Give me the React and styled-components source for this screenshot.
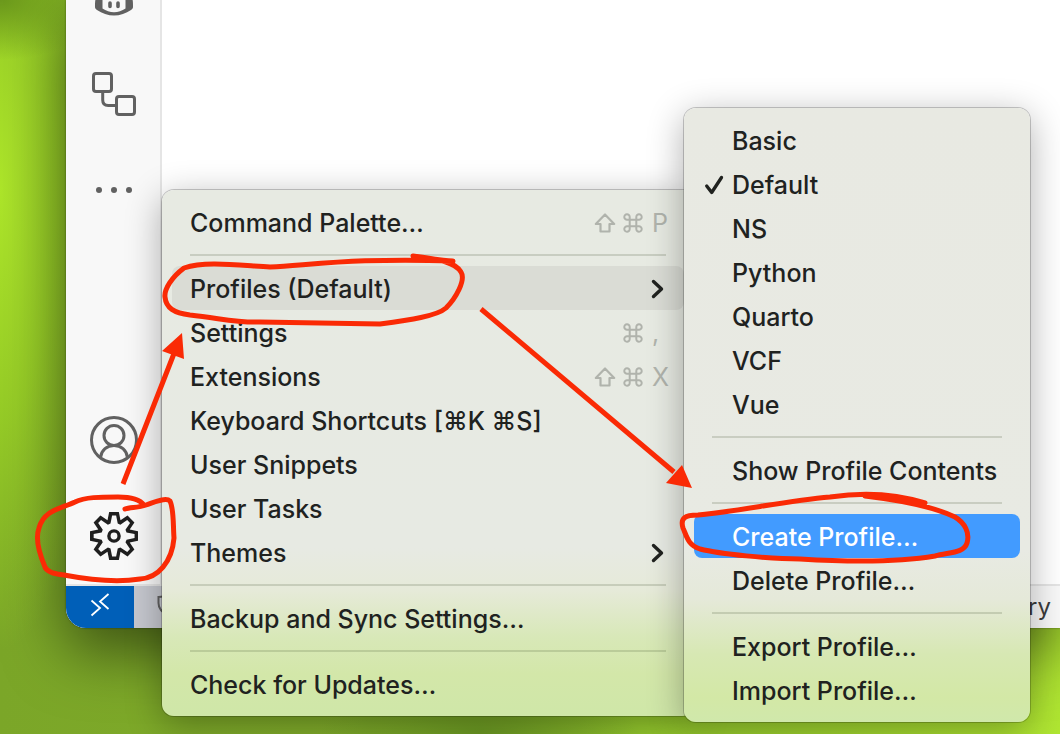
import React from "react";
import styled, { createGlobalStyle, css } from "styled-components";

const GlobalStyle = createGlobalStyle`
  *, *::before, *::after { box-sizing: border-box; }
  body {
    margin: 0;
    font-family: Inter, "Liberation Sans", sans-serif;
  }
  button { font: inherit; color: inherit; background: none; border: 0; padding: 0; margin: 0; }
`;

const Desktop = styled.div`
  position: relative;
  display: flex;
  min-height: 100vh;
  padding: 0 0 106px 66px;
  overflow: hidden;
  background:
    radial-gradient(ellipse 110px 60px at 0 0, #6b981c 0%, rgba(107, 152, 28, 0) 100%),
    radial-gradient(ellipse 110px 460px at 0 190px, #ade52a 0%, rgba(160, 218, 38, 0.7) 50%, rgba(140, 190, 36, 0) 100%),
    radial-gradient(ellipse 160px 60px at 480px 100%, #6a9722 0%, rgba(106, 151, 34, 0) 100%),
    linear-gradient(90deg, #7ba628 0%, #80ac2a 35%, #94c92d 60%, #b0e632 100%);
`;

const EditorWindow = styled.main`
  flex: 1;
  display: flex;
  flex-direction: column;
  overflow: hidden;
  background: #fff;
  border-bottom-left-radius: 20px;
  box-shadow: 0 0 2px rgba(0, 0, 0, 0.5), 0 24px 60px rgba(0, 0, 0, 0.5);
`;

const Workspace = styled.div`
  flex: 1;
  display: flex;
  min-height: 0;
`;

const ActivityBar = styled.nav`
  display: flex;
  flex-direction: column;
  width: 96px;
  box-shadow: inset -2px 0 #e5e5e5;
  background: #f8f8f8;
`;

const ActivityGroup = styled.div`
  display: flex;
  flex-direction: column;
  margin-top: ${(p) => (p.$bottom ? "auto" : "-50px")};
`;

const ActivityButton = styled.button`
  display: grid;
  place-items: center;
  height: 96px;
  color: ${(p) => (p.$active ? "#1f1f1f" : "#616161")};

  svg { display: block; }
`;

const StatusBar = styled.footer`
  display: flex;
  height: 44px;
  border-top: 2px solid #e5e5e5;
  background: #f8f8f8;
  color: #3b3b3b;
  font-size: 24px;
`;

const RemoteButton = styled.button`
  display: grid;
  place-items: center;
  width: 68px;
  padding-bottom: 4px;
  background: #005fb8;
  color: #fff;
`;

const StatusItem = styled.button`
  display: flex;
  align-items: center;
  padding: 0 8px 4px 22px;
  background: #c6c8cf;
  color: #616161;
`;

const StatusText = styled.span`
  align-self: center;
  margin-left: auto;
  padding: 0 9px 2px 0;
`;

const menuPlace = {
  main: css`
    left: 162px;
    bottom: 18px;
    width: 532px;
    background: linear-gradient(180deg, #e7eae2 0%, #e7eae3 68%, #e6ead9 76%, #d8e8b8 85%, #d3e7a9 92%, #cfe7a8 100%);
  `,
  sub: css`
    left: 684px;
    bottom: 12px;
    width: 346px;
    background: linear-gradient(180deg, #e8e9e2 0%, #e8eae3 72%, #e5e9d9 80%, #d7e8b3 89%, #d3e8a6 96%, #d0e8ab 100%);
  `,
};

const Menu = styled.div`
  position: absolute;
  display: flex;
  flex-direction: column;
  padding: 10px;
  border-radius: 12px;
  color: #20221f;
  box-shadow: 0 0 0 1px rgba(0, 0, 0, 0.2), 0 8px 36px rgba(0, 0, 0, 0.32);
  ${(p) => menuPlace[p.$place]}
`;

const MenuItem = styled.button`
  display: flex;
  align-items: center;
  justify-content: space-between;
  height: 44px;
  padding: 2px 18px 0;
  border-radius: 8px;
  font-size: 25px;
  font-weight: 500;
  line-height: 32px;
  text-align: left;
  white-space: nowrap;
  background: ${(p) => (p.$tone === "open" ? "#dadcd5" : p.$tone === "selected" ? "#429bff" : "transparent")};
  color: ${(p) => (p.$tone === "selected" ? "#fff" : "inherit")};
`;

const CheckableItem = styled(MenuItem)`
  justify-content: flex-start;
  padding: 2px 10px 0;
`;

const CheckSlot = styled.span`
  display: flex;
  width: 28px;
`;

const Separator = styled.hr`
  width: auto;
  height: 2px;
  margin: 10px 18px;
  border: 0;
  background: rgba(50, 65, 30, 0.17);
`;

const Shortcut = styled.span`
  display: flex;
  color: #b0b3ac;
  font-weight: 400;
`;

const Key = styled.kbd`
  display: flex;
  align-items: center;
  width: 29px;
  font: inherit;

  &:last-child { width: 14px; }
`;

const Annotations = styled.svg`
  position: absolute;
  top: 0;
  left: 0;
  pointer-events: none;
`;

const CopilotIcon = () => (
  <svg width="48" height="48" viewBox="0 0 48 48" fill="none" aria-hidden="true">
    <path d="M7 22C5 25 5 28 5 33C5 34 5.500 35 7 36C12 39.500 18 41.500 24 41.500S36 39.500 41 36C42.500 35 43 34 43 33C43 28 43 25 41 22" fill="#616161" />
    <path d="M12.500 22h23v12.500c-3.500 2.200-7.500 3.800-11.500 3.800s-8-1.600-11.500-3.800z" fill="#f8f8f8" />
    <path d="M20 29v3.500M28 29v3.500" stroke="#616161" strokeWidth="3.600" strokeLinecap="round" />
    <path d="M8 24V12l8-6h16l8 6v12" stroke="#616161" strokeWidth="3" />
  </svg>
);

const NodesIcon = () => (
  <svg width="48" height="48" viewBox="0 0 48 48" fill="none" stroke="currentColor" strokeWidth="3" aria-hidden="true">
    <rect x="3.5" y="3.5" width="18" height="18" rx="2.5" />
    <rect x="26.5" y="26.5" width="18" height="18" rx="2.5" />
    <path d="M12.7 22v8q0 5.5 5.5 5.5H26" />
  </svg>
);

const DotsIcon = () => (
  <svg width="48" height="48" viewBox="0 0 48 48" fill="currentColor" aria-hidden="true">
    <circle cx="9" cy="24" r="3" />
    <circle cx="24" cy="24" r="3" />
    <circle cx="39" cy="24" r="3" />
  </svg>
);

const AccountIcon = () => (
  <svg width="48" height="48" viewBox="0 0 48 48" fill="none" stroke="currentColor" strokeWidth="3" aria-hidden="true">
    <circle cx="24" cy="24" r="22.5" />
    <circle cx="24" cy="19.5" r="10" />
    <path d="M10.5 41.5C11.5 34 17 29.5 24 29.5S36.500 34 37.500 41.500" />
  </svg>
);

const GearIcon = () => (
  <svg width="48" height="48" viewBox="0 0 24 24" fill="currentColor" fillRule="evenodd" aria-hidden="true">
    <path d="M19.85 8.75l4.15.83v4.84l-4.15.83 2.35 3.52-3.43 3.43-3.52-2.35-.83 4.15H9.58l-.83-4.15-3.52 2.35-3.43-3.43 2.35-3.52L0 14.42V9.58l4.15-.83L1.8 5.23 5.23 1.8l3.52 2.35L9.58 0h4.84l.83 4.15 3.52-2.35 3.43 3.43-2.35 3.52zm-1.57 5.07l4-.81v-2l-4-.81-.54-1.3 2.29-3.43-1.43-1.43-3.43 2.29-1.3-.54-.81-4h-2l-.81 4-1.3.54-3.43-2.29-1.43 1.43L6.38 8.9l-.54 1.3-4 .81v2l4 .81.54 1.3-2.29 3.43 1.43 1.43 3.43-2.29 1.3.54.81 4h2l.81-4 1.3-.54 3.43 2.29 1.43-1.43-2.29-3.43.54-1.3z" />
    <circle cx="12" cy="12" r="2.55" fill="none" stroke="currentColor" strokeWidth="1.7" />
  </svg>
);

const RemoteIcon = () => (
  <svg width="24" height="28" viewBox="0 0 24 28" fill="none" stroke="currentColor" strokeWidth="1.8" aria-hidden="true">
    <path d="M3.500 9.500l8.500 7.500-8.500 7.500M20.500 3l-8.500 7.500 8.500 7.500" />
  </svg>
);

const ShieldIcon = () => (
  <svg width="24" height="28" viewBox="0 0 24 28" fill="none" stroke="currentColor" strokeWidth="2" aria-hidden="true">
    <path d="M12 4Q8 6 2.500 6v6q0 8 9.500 12 9.500-4 9.500-12V6Q16 6 12 4z" />
  </svg>
);

const ChevronIcon = () => (
  <svg width="18" height="22" viewBox="0 0 18 22" fill="none" stroke="currentColor" strokeWidth="3.4" strokeLinecap="round" strokeLinejoin="round" aria-hidden="true">
    <path d="M5.500 3.500l8 7.500-8 7.500" />
  </svg>
);

const CheckIcon = () => (
  <svg width="20" height="22" viewBox="0 0 20 22" fill="none" stroke="currentColor" strokeWidth="3.300" strokeLinecap="round" strokeLinejoin="round" aria-hidden="true">
    <path d="M2.700 12l5 6.500L17.500 3.500" />
  </svg>
);

const ShiftIcon = () => (
  <svg width="22" height="22" viewBox="0 0 22 22" fill="none" stroke="currentColor" strokeWidth="2.200" strokeLinejoin="round" aria-label="Shift">
    <path d="M11 2.500L1.800 12h4.700v7.500h9V12h4.700z" />
  </svg>
);

const CommandIcon = () => (
  <svg width="20" height="22" viewBox="0 0 20 22" fill="none" stroke="currentColor" strokeWidth="2" aria-label="Command">
    <path d="M6.700 7.700h6.600v6.600H6.700zM6.700 7.700H4.200a2.700 2.700 0 1 1 2.500-2.700zM13.300 7.700V5a2.700 2.700 0 1 1 2.500 2.700zM13.300 14.300h2.500a2.700 2.700 0 1 1-2.500 2.700zM6.700 14.300V17a2.700 2.700 0 1 1-2.500-2.700z" />
  </svg>
);

const keyIcons = { shift: <ShiftIcon />, cmd: <CommandIcon /> };

const mainItems = [
  { label: "Command Palette…", keys: ["shift", "cmd", "P"] },
  null,
  { label: "Profiles (Default)", submenu: true, open: true },
  { label: "Settings", keys: ["cmd", ","] },
  { label: "Extensions", keys: ["shift", "cmd", "X"] },
  { label: "Keyboard Shortcuts [⌘K ⌘S]" },
  { label: "User Snippets" },
  { label: "User Tasks" },
  { label: "Themes", submenu: true },
  null,
  { label: "Backup and Sync Settings…" },
  null,
  { label: "Check for Updates…" },
];

const profiles = ["Basic", "Default", "NS", "Python", "Quarto", "VCF", "Vue"];
const profileActions = [
  null,
  "Show Profile Contents",
  null,
  "Create Profile…",
  "Delete Profile…",
  null,
  "Export Profile…",
  "Import Profile…",
];

export default function App() {
  return (
    <Desktop>
      <GlobalStyle />
      <EditorWindow>
        <Workspace>
          <ActivityBar aria-label="Activity bar">
            <ActivityGroup>
              <ActivityButton aria-label="Copilot"><CopilotIcon /></ActivityButton>
              <ActivityButton aria-label="Workflows"><NodesIcon /></ActivityButton>
              <ActivityButton aria-label="Additional views"><DotsIcon /></ActivityButton>
            </ActivityGroup>
            <ActivityGroup $bottom>
              <ActivityButton aria-label="Accounts"><AccountIcon /></ActivityButton>
              <ActivityButton aria-label="Manage" $active><GearIcon /></ActivityButton>
            </ActivityGroup>
          </ActivityBar>
        </Workspace>
        <StatusBar>
          <RemoteButton aria-label="Open a remote window"><RemoteIcon /></RemoteButton>
          <StatusItem aria-label="Restricted mode"><ShieldIcon /></StatusItem>
          <StatusText>ry</StatusText>
        </StatusBar>
      </EditorWindow>

      <Menu $place="main" role="menu" aria-label="Manage">
        {mainItems.map((item, i) =>
          item ? (
            <MenuItem key={item.label} role="menuitem" $tone={item.open ? "open" : undefined}>
              {item.label}
              {item.submenu && <ChevronIcon />}
              {item.keys && (
                <Shortcut>
                  {item.keys.map((k) => <Key key={k}>{keyIcons[k] || k}</Key>)}
                </Shortcut>
              )}
            </MenuItem>
          ) : (
            <Separator key={i} />
          )
        )}
      </Menu>

      <Menu $place="sub" role="menu" aria-label="Profiles">
        {profiles.map((name) => (
          <CheckableItem key={name} role="menuitemradio" aria-checked={name === "Default"}>
            <CheckSlot>{name === "Default" && <CheckIcon />}</CheckSlot>
            {name}
          </CheckableItem>
        ))}
        {profileActions.map((name, i) =>
          name ? (
            <CheckableItem key={name} role="menuitem" $tone={name === "Create Profile…" ? "selected" : undefined}>
              <CheckSlot />
              {name}
            </CheckableItem>
          ) : (
            <Separator key={i} />
          )
        )}
      </Menu>

      <Annotations width="1060" height="734" viewBox="0 0 1060 734" fill="none" stroke="#fa2a05" strokeWidth="5" strokeLinecap="round" strokeLinejoin="round" aria-hidden="true">
        <path d="M413 256C430 258 440 261 453 261C360 258 320 264 270 267C235 265 205 261 184 268C172 277 164 289 165 297C166 308 174 313 190 315C220 318 235 323 260 322L380 324C410 320 437 316 446 308C456 298 466 280 461 272C456 263 440 259 413 256" />
        <path d="M125 509C130 507 138 508 146 505C155 502 166 497 170 501C174 509 173 525 174 538C172 562 158 578 140 579C115 583 85 579 64 575C53 574 47 572 45 567C39 553 35 539 39 528C44 510 60 509 75 502C85 497 100 497 118 497C133 497 141 501 144 505" />
        <path d="M865 496C890 499 930 505 955 517C965 523 970 533 967 543C964 553 950 552 935 556C900 562 850 562 800 559C770 559 720 554 700 549C688 545 687 537 683 528C680 518 685 515 698 515C740 511 785 501 830 497C870 491 903 496 925 503" />
        <path d="M123 484L175 351M481 309L674 472" strokeLinecap="butt" />
        <path d="M182 333L162 351L184 359zM692 488L682 465L666 483z" fill="#fa2a05" stroke="none" />
      </Annotations>
    </Desktop>
  );
}
